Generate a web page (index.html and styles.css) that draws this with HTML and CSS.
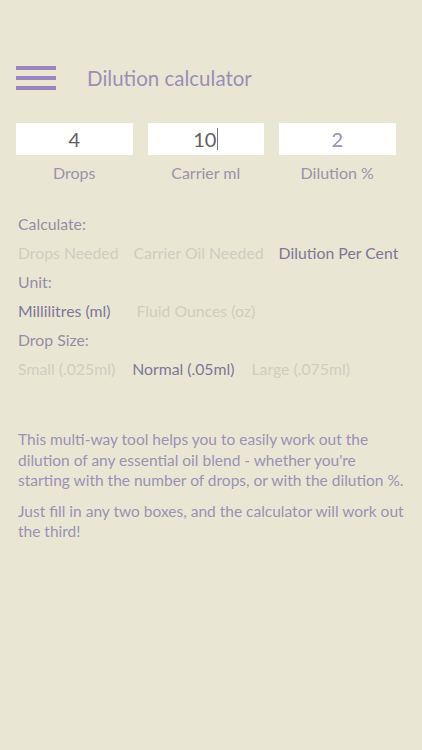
FILE: index.html
```html
<!DOCTYPE html>
<html lang="en">
<head>
  <meta charset="UTF-8" />
  <meta name="viewport" content="width=device-width, initial-scale=1" />
  <title>Dilution calculator</title>
  <link rel="stylesheet" href="styles.css">
</head>
<body>
  <header class="topbar">
    <button class="menu-btn" aria-label="Menu">
      <span></span><span></span><span></span>
    </button>
    <h1>Dilution calculator</h1>
  </header>

  <div class="fields">
    <label class="field">
      <input type="text" value="4" class="val">
      <span>Drops</span>
    </label>
    <label class="field">
      <span class="fake-input val">10<i class="caret"></i></span>
      <span>Carrier ml</span>
    </label>
    <label class="field">
      <input type="text" value="2" class="val result">
      <span>Dilution %</span>
    </label>
  </div>

  <div class="options">
    <div class="opt-title">Calculate:</div>
    <div class="opt-row">
      <span>Drops Needed</span>
      <span>Carrier Oil Needed</span>
      <span class="on">Dilution Per Cent</span>
    </div>
    <div class="opt-title">Unit:</div>
    <div class="opt-row wide">
      <span class="on">Millilitres (ml)</span>
      <span>Fluid Ounces (oz)</span>
    </div>
    <div class="opt-title">Drop Size:</div>
    <div class="opt-row loose">
      <span>Small (.025ml)</span>
      <span class="on">Normal (.05ml)</span>
      <span>Large (.075ml)</span>
    </div>
  </div>

  <div class="about">
    <p>This multi-way tool helps you to easily work out the dilution of any essential oil blend - whether you're starting with the number of drops, or with the dilution %.</p>
    <p>Just fill in any two boxes, and the calculator will work out the third!</p>
  </div>
</body>
</html>
```

FILE: styles.css
```css
body {
  font-family: 'Lato', 'Noto Sans', sans-serif;
  background: #e9e7d4;
  color: #9890ad;
  margin: 0;
  padding: 0 16px;
}
.topbar {
  display: flex;
  align-items: center;
  height: 58px;
  margin-top: 49px;
}
.menu-btn {
  display: flex;
  flex-direction: column;
  gap: 6px;
  width: 40px;
  padding: 0;
  border: none;
  background: none;
  cursor: pointer;
}
.menu-btn span {
  display: block;
  height: 4px;
  background: #9886bd;
}
h1 {
  margin: 0 0 0 31px;
  font-size: 20.5px;
  font-weight: 400;
  color: #9a8fb6;
}
.fields {
  display: grid;
  grid-template-columns: repeat(3, 116.5px);
  column-gap: 15px;
  margin-top: 16px;
}
.field {
  display: flex;
  flex-direction: column;
  align-items: center;
  font-size: 16px;
  color: #9a93aa;
}
.val {
  box-sizing: border-box;
  width: 100%;
  height: 32px;
  margin-bottom: 8px;
  border: none;
  background: #fff;
  font-family: inherit;
  font-size: 20px;
  color: #616066;
  text-align: center;
  outline: none;
}
.fake-input {
  display: flex;
  align-items: center;
  justify-content: center;
}
.caret {
  display: inline-block;
  width: 1px;
  height: 22px;
  margin-left: 1px;
  background: #777;
}
.val.result {
  color: #9a90b8;
}
.options {
  margin-top: 27px;
  padding-left: 2px;
  font-size: 15.8px;
}
.opt-title,
.opt-row {
  height: 29px;
  line-height: 29px;
}
.opt-title {
  color: #958da8;
}
.opt-row {
  display: flex;
  gap: 15px;
  color: #d0cdc0;
  white-space: nowrap;
}
.opt-row.wide {
  gap: 26px;
}
.opt-row.loose {
  gap: 17px;
}
.opt-row .on {
  color: #7f7699;
}
.about {
  margin-top: 46px;
  padding-left: 2px;
  font-size: 15.5px;
  line-height: 20.5px;
  color: #9a92b4;
}
.about p {
  margin: 0 0 10px;
}
```
